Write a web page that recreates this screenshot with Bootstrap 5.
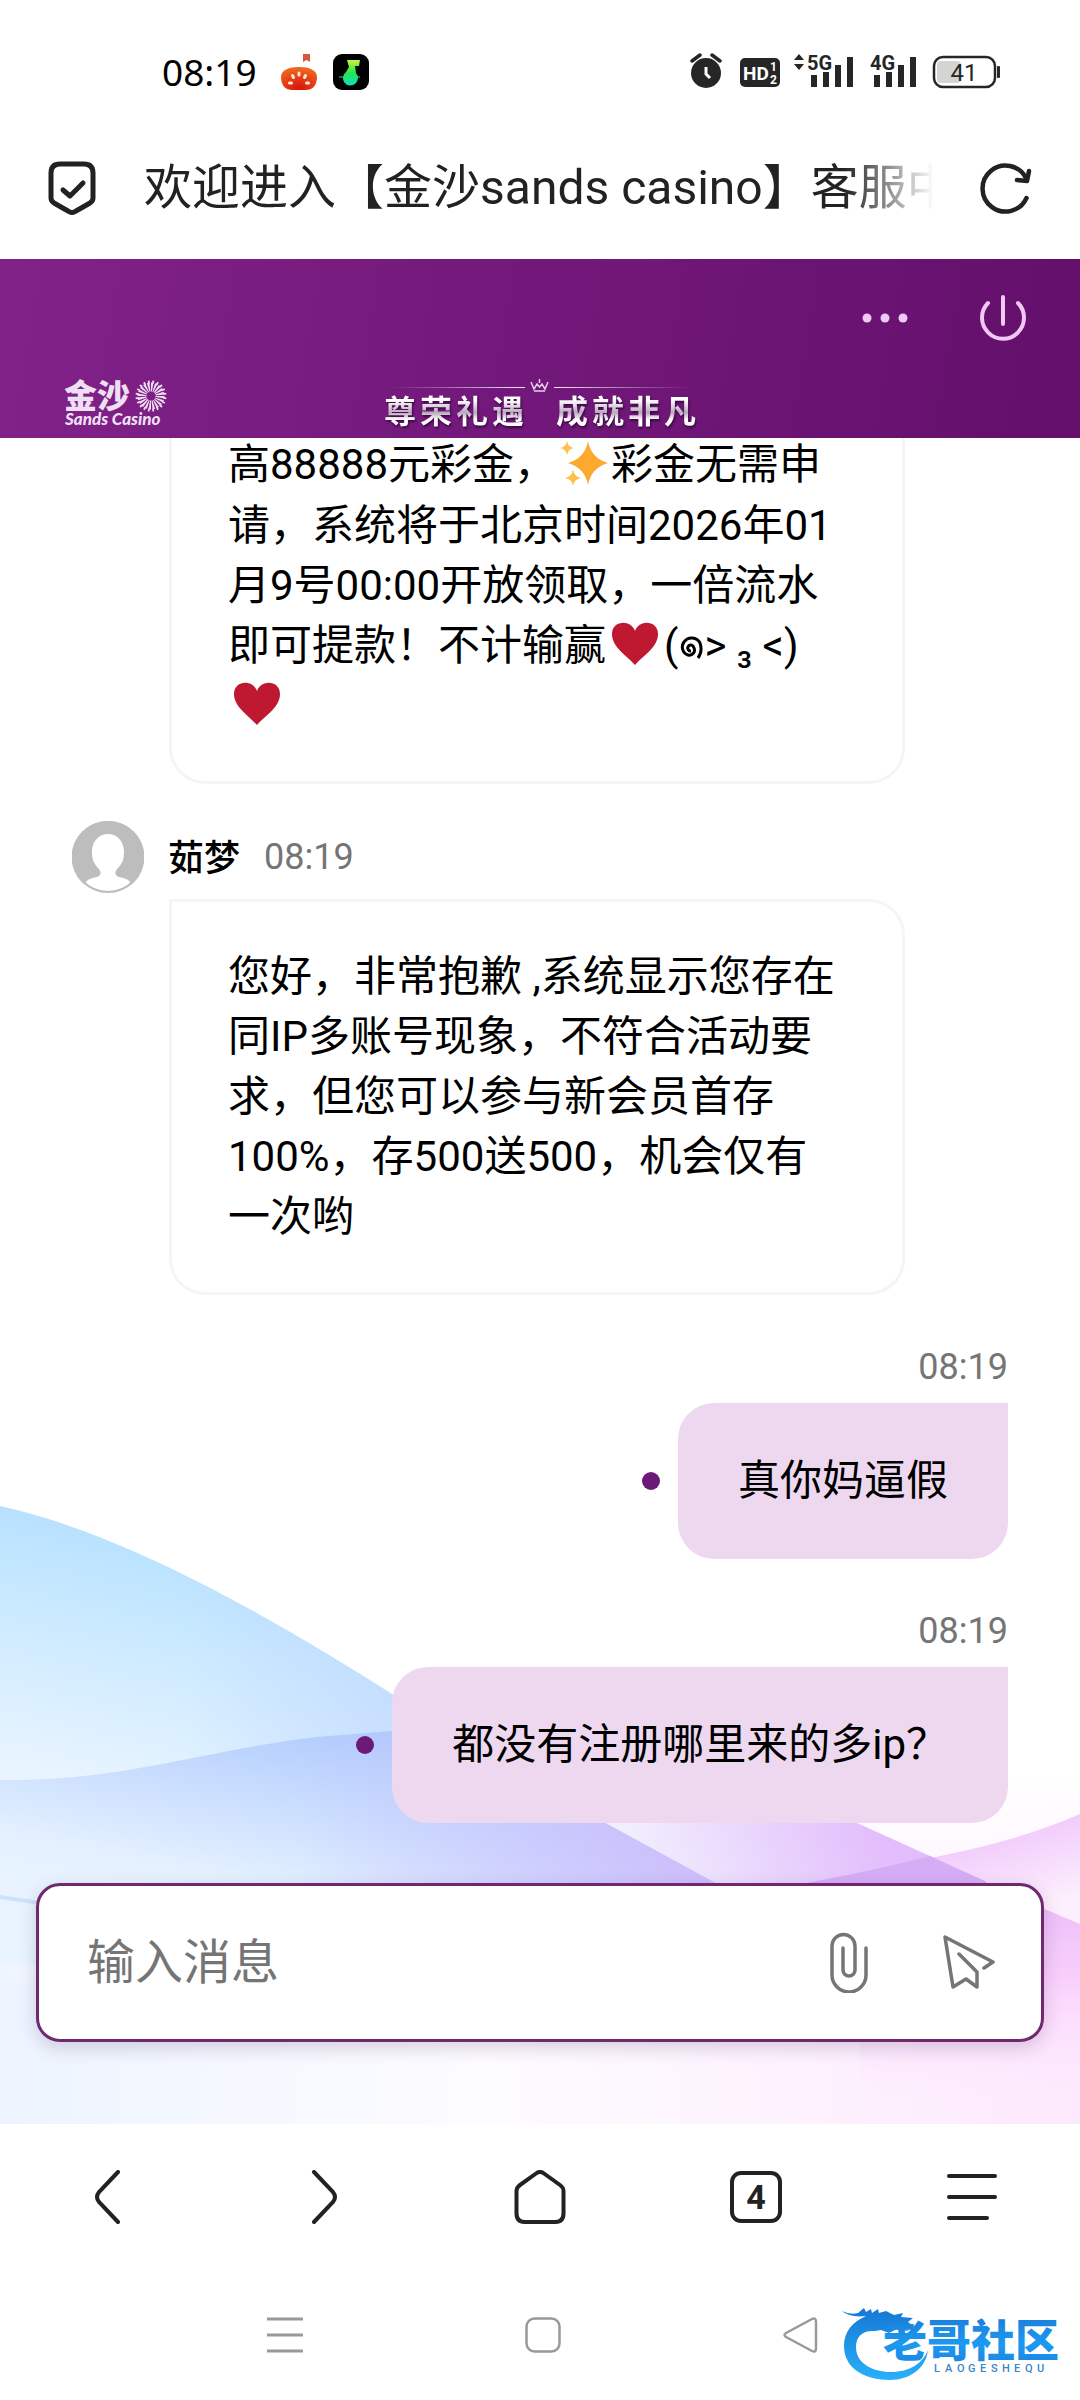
<!DOCTYPE html>
<html lang="zh-CN">
<head>
<meta charset="utf-8">
<meta name="viewport" content="width=device-width, initial-scale=1">
<title>欢迎进入【金沙sands casino】客服中心</title>
<link href="https://cdn.jsdelivr.net/npm/bootstrap@5.3.0/dist/css/bootstrap.min.css" rel="stylesheet">
<style>
  :root { --plum: #6b1a78; --ink: #222; --muted: #757575; }
  body { font-family: Roboto, "Noto Sans CJK SC", sans-serif; color: #000; background: #fff; }
  svg { display: block; flex: none; }
  .btn-bare { border: 0; background: none; padding: 0; color: inherit; display: flex; align-items: center; justify-content: center; }

  .status-row { padding: 48px 78px 0 162px; height: 96px; }
  .status-clock { font-family: "Noto Sans", sans-serif; font-size: 37px; line-height: 48px; margin-right: 24px; }

  .address-row { padding: 62px 48px 41px; color: var(--ink); }
  .page-title { font-size: 48px; line-height: 60px; margin: 0 46px 0 48px; font-weight: 400; overflow: hidden; white-space: nowrap;
    -webkit-mask-image: linear-gradient(to right, #000 calc(100% - 90px), transparent); mask-image: linear-gradient(to right, #000 calc(100% - 90px), transparent); }

  .brand-bar { height: 179px; background: linear-gradient(100deg, #812289 0%, #72187a 50%, #640f6c 100%); color: #efc9f3; padding: 0 53px 11px 64px; }
  .brand-tools { gap: 56px; padding-top: 34px; }
  .slogan { left: 0; right: 0; bottom: 11px; }
  .slogan-words { margin-top: -3px; filter: drop-shadow(1px 2px 1px #3d0745); }
  .slogan-words span { font-family: "Noto Sans CJK SC", sans-serif; font-weight: 700; font-size: 32px; line-height: 36px; width: 36px; text-align: center;
    color: transparent; background: linear-gradient(#fff 25%, #b9a9bd 60%, #fff 80%); -webkit-background-clip: text; background-clip: text; }
  .slogan-gap { margin-left: 28px; }

  .chat { overflow: hidden; }
  .waves { left: 0; bottom: 0; width: 100%; height: 720px; }
  .log { padding: 0 72px; }
  .bubble { font-size: 42px; line-height: 60px; }
  .bubble-in { width: 736px; margin-left: 97px; padding: 45px 57px 45px 56px; background: #fff; border: 3px solid #f5f5f5; border-radius: 0 36px 36px 36px; }
  .bubble-cut { border-top: 0; border-radius: 0 0 36px 36px; padding-top: 0; margin-top: -3px; }
  .bubble-out { padding: 48px 60px; background: #eed8ef; border-radius: 36px 0 36px 36px; }
  .inline-pic { display: inline-block; vertical-align: middle; margin-bottom: 10px; }
  .inline-glyph { display: inline-block; vertical-align: middle; }
  .sender { gap: 24px; margin: 37px 0 6px; }
  .sender-name { font-family: "Noto Sans CJK SC", sans-serif; font-size: 36px; font-weight: 500; line-height: 44px; margin-bottom: 4px; }
  .stamp { font-size: 36px; line-height: 48px; color: var(--muted); }
  .outgoing { gap: 12px; margin-top: 48px; }
  .unread { width: 18px; height: 18px; border-radius: 50%; background: var(--plum); margin-right: 18px; }

  .composer { margin: 60px 36px 82px; height: 159px; padding: 0 46px 0 48px; background: #fff; border: 3px solid #70286f; border-radius: 24px; box-shadow: 0 6px 18px rgba(60, 20, 80, .18); color: var(--muted); }
  .composer input { border: 0; padding: 0; font-size: 48px; line-height: 60px; height: 72px; color: #000; background: none; }
  .composer input:focus { box-shadow: none; }
  .composer input::placeholder { color: var(--muted); opacity: 1; }
  .attach { margin-right: 34px; }

  .browser-nav { height: 147px; color: var(--ink); }
  .tab-count { width: 52px; height: 52px; border: 4px solid var(--ink); border-radius: 11px; font-size: 34px; line-height: 44px; font-weight: 700; }
  .system-nav { height: 130px; color: #999; padding: 46px 261px 48px 267px; }
  .watermark { right: 12px; bottom: 14px; }
</style>
</head>
<body class="d-flex flex-column min-vh-100">

<div class="status-row d-flex align-items-center">
  <span class="status-clock">08:19</span>
  <svg width="88" height="38" viewBox="0 0 88 38" aria-hidden="true">
    <defs>
      <radialGradient id="tomato" cx=".5" cy=".9" r=".8"><stop offset="0" stop-color="#d9130c"/><stop offset="1" stop-color="#f0631b"/></radialGradient>
      <linearGradient id="note" x1="0" y1="0" x2="0" y2="1"><stop offset="0" stop-color="#c8f23a"/><stop offset=".5" stop-color="#22e64c"/><stop offset="1" stop-color="#12dfc4"/></linearGradient>
    </defs>
    <path d="M22 1h7v8l-3.500-2-3.500 2z" fill="#cf5a3c"/>
    <path d="M0 24C0 17 8 14 18 14s18 3 18 10c0 9-5 13-11 13H11C5 37 0 33 0 24z" fill="url(#tomato)"/>
    <g stroke="#ffe9dc" stroke-width="3" stroke-linecap="round"><path d="M18 20v2M11.500 22.500l1 2M24.500 22.500l-1 2M8.500 30h2M25.500 30h2"/></g>
    <rect x="52" y="1" width="36" height="36" rx="9" fill="#000"/>
    <path d="M66 7h13l-1 6h-4l1 7a7.500 7.500 0 1 1-10-1l3-5z" fill="url(#note)"/><path d="M58 24h7M74 24h5" stroke="#22e67c" stroke-width="1"/>
  </svg>
  <svg class="ms-auto" width="312" height="38" viewBox="0 0 312 38" fill="#262626" font-family="Roboto, sans-serif" font-weight="700" aria-hidden="true">
    <circle cx="16" cy="20" r="15"/><path d="M2 8l8-6M30 8l-8-6" stroke="#262626" stroke-width="3.500" stroke-linecap="round"/>
    <path d="M16 14v7l4 4" fill="none" stroke="#fff" stroke-width="3"/>
    <rect x="50" y="5" width="40" height="29" rx="5"/>
    <text x="53" y="27" font-size="19" fill="#fff">HD</text><text x="80" y="18" font-size="12" fill="#fff">1</text><text x="80" y="31" font-size="12" fill="#fff">2</text>
    <path d="M109 1l5 6h-10zM109 17l5-6h-10z"/>
    <text x="117" y="17" font-size="20">5G</text>
    <path d="M121 22h6v12h-6zM133 19h6v15h-6zM145 12h6v22h-6zM157 4h6v30h-6z"/>
    <text x="180" y="17" font-size="20">4G</text>
    <path d="M184 22h6v12h-6zM196 19h6v15h-6zM208 12h6v22h-6zM220 4h6v30h-6z"/>
    <rect x="247" y="8" width="24" height="22" rx="4" fill="#d4d4d4"/>
    <rect x="244" y="4" width="61" height="30" rx="9" fill="none" stroke="#262626" stroke-width="2.500"/><rect x="307" y="13" width="3" height="12" rx="1"/>
    <text x="274" y="28" font-size="24" font-weight="400" text-anchor="middle">41</text>
  </svg>
</div>

<div class="address-row d-flex align-items-center">
  <svg width="48" height="54" viewBox="0 0 48 54" fill="none" stroke="currentColor" stroke-width="5" stroke-linejoin="round" stroke-linecap="round" aria-label="安全" role="img">
    <path d="M12 3h24q9 0 9 9v25q0 3-3 5L28 50q-4 3-8 0L6 42q-3-2-3-5V12q0-9 9-9z"/><path d="M15 29l7 6 13-13"/>
  </svg>
  <h1 class="page-title flex-fill">欢迎进入【金沙sands casino】客服中心</h1>
  <button type="button" class="btn-bare" aria-label="刷新">
    <svg width="52" height="54" viewBox="0 0 52 54" fill="none" stroke="currentColor" stroke-width="4.500" stroke-linecap="round" stroke-linejoin="round">
      <path d="M46.500 37A23 23 0 1 1 46 17"/><path d="M49 10l-2 10-10-1"/>
    </svg>
  </button>
</div>

<header class="brand-bar position-relative d-flex align-items-end justify-content-between">
  <svg width="104" height="48" viewBox="0 0 104 48" fill="#efdff2" aria-label="金沙 Sands Casino" role="img">
    <text x="0" y="29" font-family="'Noto Sans CJK SC', sans-serif" font-weight="900" font-size="33">金沙</text>
    <g fill="none" stroke="#efdff2"><circle cx="87" cy="17" r="9" stroke-width="9" pathLength="40" stroke-dasharray="1.200 .8"/><circle cx="87" cy="17" r="14" stroke-width="3" pathLength="40" stroke-dasharray=".8 1.200" stroke-dashoffset="-.6"/></g>
    <text x="1" y="46" font-family="Lato, sans-serif" font-style="italic" font-weight="900" font-size="17">Sands Casino</text>
  </svg>
  <div class="slogan position-absolute d-flex flex-column align-items-center">
    <svg width="300" height="16" viewBox="0 0 300 16" fill="none" stroke="#e9cdec" aria-hidden="true">
      <defs><linearGradient id="fadeL"><stop offset="0" stop-color="#e9cdec" stop-opacity="0"/><stop offset="1" stop-color="#f7e6f9"/></linearGradient><linearGradient id="fadeR"><stop offset="0" stop-color="#f7e6f9"/><stop offset="1" stop-color="#e9cdec" stop-opacity="0"/></linearGradient></defs>
      <rect x="0" y="9" width="135" height="1" fill="url(#fadeL)" stroke="none"/><rect x="164" y="9" width="136" height="1" fill="url(#fadeR)" stroke="none"/>
      <path d="M141 4l3 7 3-5 2.500 3L152 6l3 5 3-7M144 13h11M149.500 1v4" stroke-width="1.500"/>
    </svg>
    <div class="slogan-words d-flex"><span>尊</span><span>荣</span><span>礼</span><span>遇</span><span class="slogan-gap">成</span><span>就</span><span>非</span><span>凡</span></div>
  </div>
  <div class="brand-tools d-flex align-items-center align-self-start ms-auto">
    <button type="button" class="btn-bare" aria-label="更多"><svg width="70" height="50" viewBox="0 0 70 50" fill="currentColor"><circle cx="16" cy="25" r="4.500"/><circle cx="34" cy="25" r="4.500"/><circle cx="52" cy="25" r="4.500"/></svg></button>
    <button type="button" class="btn-bare" aria-label="退出"><svg width="50" height="50" viewBox="0 0 50 50" fill="none" stroke="currentColor" stroke-width="4" stroke-linecap="round"><path d="M11 10a21 21 0 1 0 30 0M26 4v27"/></svg></button>
  </div>
</header>

<main class="chat position-relative flex-grow-1">
  <svg class="waves position-absolute" viewBox="0 0 1080 720" preserveAspectRatio="none" aria-hidden="true">
    <defs>
      <linearGradient id="base" x1="0" x2="1" y1="0" y2="0"><stop offset="0" stop-color="#edf4ff"/><stop offset=".45" stop-color="#fdfcff"/><stop offset="1" stop-color="#fde9fd"/></linearGradient>
      <linearGradient id="topFade" x1="0" x2="0" y1="0" y2="1"><stop offset=".52" stop-color="#fff"/><stop offset=".82" stop-color="#fff" stop-opacity="0"/></linearGradient>
      <linearGradient id="skyWing" gradientUnits="userSpaceOnUse" x1="150" y1="110" x2="90" y2="375"><stop offset="0" stop-color="#b3dfff"/><stop offset=".4" stop-color="#c8e9ff"/><stop offset="1" stop-color="#e8f4ff"/></linearGradient>
      <linearGradient id="skyTint" x1="0" x2="1" y1="0" y2="0"><stop offset=".4" stop-color="#bcd0ff" stop-opacity="0"/><stop offset="1" stop-color="#bfcfff" stop-opacity=".6"/></linearGradient>
      <linearGradient id="blueWing" gradientUnits="userSpaceOnUse" x1="380" y1="320" x2="320" y2="620"><stop offset="0" stop-color="#acc8fc"/><stop offset=".35" stop-color="#cde0ff"/><stop offset=".6" stop-color="#e4f1ff"/><stop offset="1" stop-color="#edf4ff" stop-opacity="0"/></linearGradient>
      <linearGradient id="violetTint" gradientUnits="userSpaceOnUse" x1="300" y1="0" x2="716" y2="0"><stop offset="0" stop-color="#cfc4ff" stop-opacity="0"/><stop offset="1" stop-color="#cdbdfb"/></linearGradient>
      <linearGradient id="lilac" gradientUnits="userSpaceOnUse" x1="640" y1="480" x2="870" y2="400"><stop offset="0" stop-color="#f1effe"/><stop offset="1" stop-color="#e2bdfc"/></linearGradient>
      <linearGradient id="pinkCrest" gradientUnits="userSpaceOnUse" x1="960" y1="430" x2="985" y2="520"><stop offset="0" stop-color="#efc6fc"/><stop offset="1" stop-color="#fdf0fd"/></linearGradient>
      <linearGradient id="pinkLow" gradientUnits="userSpaceOnUse" x1="0" y1="500" x2="0" y2="590"><stop offset="0" stop-color="#eebdfa"/><stop offset="1" stop-color="#f8d5fb"/></linearGradient>
      <linearGradient id="pinkFloor" gradientUnits="userSpaceOnUse" x1="0" y1="558" x2="0" y2="700"><stop offset="0" stop-color="#f8c8fb"/><stop offset="1" stop-color="#fdeafd" stop-opacity="0"/></linearGradient>
    </defs>
    <rect width="1080" height="720" fill="url(#base)"/><rect width="1080" height="720" fill="url(#topFade)"/>
    <path d="M0 102C130 130 290 225 392 290L606 420 716 480 860 560H0z" fill="url(#skyWing)"/>
    <path d="M0 102C130 130 290 225 392 290L460 330V400H0z" fill="url(#skyTint)"/>
    <path d="M0 376C120 378 210 345 317 333L480 320 606 419 716 479V640H0z" fill="url(#blueWing)"/>
    <path d="M300 334L480 320 606 419 716 479V520H300z" fill="url(#violetTint)"/>
    <path d="M480 340L606 419 716 479 800 520H1010L985 477 930 452 857 419 760 370z" fill="url(#lilac)"/>
    <path d="M1080 410C1000 445 930 453 806 479L900 540H1080z" fill="url(#pinkCrest)"/>
    <path d="M806 479Q880 465 930 452L985 477 1010 500H820z" fill="#d5adf6"/>
    <path d="M860 480H985L1080 520V558Q980 568 860 571z" fill="url(#pinkLow)"/>
    <path d="M860 570Q980 568 1080 557V720H860z" fill="url(#pinkFloor)"/>
    <path d="M0 493Q20 496 60 502" fill="none" stroke="#cfe2fb" stroke-width="4"/>
  </svg>

  <div class="log position-relative">
    <div class="bubble bubble-in bubble-cut">高88888元彩金，<svg class="inline-pic" width="55" height="46" viewBox="0 0 55 46" role="img" aria-label="闪光"><path d="M32 1q3 17 20 22-17 5-20 22-3-17-20-22 17-5 20-22z" fill="#fda92f"/><path d="M11 1q1 6 7 7-6 1-7 7-1-6-7-7 6-1 7-7zM17 29q1 8 8 9-7 1-8 8-1-7-8-8 7-1 8-9z" fill="#fcc04b"/></svg>彩金无需申请，系统将于北京时间2026年01月9号00:00开放领取，一倍流水即可提款！不计输赢<svg class="inline-pic" width="58" height="44" viewBox="0 0 58 44" role="img" aria-label="红心"><path d="M29 43C20 33 6 25 6 12 6 -2 25 -3 29 9 33 -3 52 -2 52 12 52 25 38 33 29 43z" fill="#be1931"/></svg>(<svg class="inline-glyph" width="26" height="28" viewBox="0 0 26 28" fill="none" stroke="#000" stroke-width="3" role="img" aria-label="๑"><path d="M13 16a3 3 0 1 1 2-5c4 6-1 10-5 9-6-2-7-9-4-13 4-6 13-5 16 1 2 6 1 11-2 15"/></svg>&gt; ₃ &lt;) <svg class="inline-pic" width="58" height="44" viewBox="0 0 58 44" role="img" aria-label="红心"><path d="M29 43C20 33 6 25 6 12 6 -2 25 -3 29 9 33 -3 52 -2 52 12 52 25 38 33 29 43z" fill="#be1931"/></svg></div>

    <div class="sender d-flex align-items-center">
      <svg width="72" height="72" viewBox="0 0 72 72" role="img" aria-label="头像"><circle cx="36" cy="36" r="35" fill="#fff" stroke="#bdbdbd" stroke-width="2"/><path d="M36 0a36 36 0 0 0-23 64c1-6 7-7 12-8 4-1 5-5 1-9-4-4-6-9-6-16 0-11 7-18 16-18s16 7 16 18c0 7-2 12-6 16-4 4-3 8 1 9 5 1 11 2 12 8A36 36 0 0 0 36 0z" fill="#bdbdbd"/></svg>
      <span class="sender-name">茹梦</span>
      <time class="stamp">08:19</time>
    </div>
    <div class="bubble bubble-in">您好，非常抱歉 ,系统显示您存在同IP多账号现象，不符合活动要求，但您可以参与新会员首存100%，存500送500，机会仅有一次哟</div>

    <div class="outgoing d-flex flex-column align-items-end">
      <time class="stamp">08:19</time>
      <div class="d-flex align-items-center"><span class="unread"></span><div class="bubble bubble-out">真你妈逼假</div></div>
    </div>
    <div class="outgoing d-flex flex-column align-items-end">
      <time class="stamp">08:19</time>
      <div class="d-flex align-items-center"><span class="unread"></span><div class="bubble bubble-out">都没有注册哪里来的多ip？</div></div>
    </div>
  </div>

  <form class="composer position-relative d-flex align-items-center">
    <input type="text" class="form-control flex-fill" placeholder="输入消息" aria-label="输入消息">
    <button type="button" class="btn-bare attach" aria-label="附件"><svg width="90" height="62" viewBox="0 0 90 62" fill="none" stroke="currentColor" stroke-width="3.500" stroke-linecap="round"><path d="M24 17v22a5.500 5.500 0 0 0 12 0V15a11.500 11.500 0 0 0-23 0v29a17 17 0 0 0 34 0V17"/></svg></button>
    <button type="submit" class="btn-bare" aria-label="发送"><svg width="52" height="54" viewBox="0 0 52 54" fill="none" stroke="currentColor" stroke-width="3.500" stroke-linecap="round" stroke-linejoin="round"><path d="M41 33l9-6L2 2l8 50 13-8 11 8V37L16 19"/></svg></button>
  </form>
</main>

<nav class="browser-nav row g-0 align-items-center flex-shrink-0" aria-label="浏览器">
  <div class="col d-flex justify-content-center"><button type="button" class="btn-bare" aria-label="后退"><svg width="28" height="54" viewBox="0 0 28 54" fill="none" stroke="currentColor" stroke-width="4" stroke-linecap="round"><path d="M24 2L5 22q-4 5 0 10l19 20"/></svg></button></div>
  <div class="col d-flex justify-content-center"><button type="button" class="btn-bare" aria-label="前进"><svg width="28" height="54" viewBox="0 0 28 54" fill="none" stroke="currentColor" stroke-width="4" stroke-linecap="round"><path d="M4 2l19 20q4 5 0 10L4 52"/></svg></button></div>
  <div class="col d-flex justify-content-center"><button type="button" class="btn-bare" aria-label="主页"><svg width="52" height="54" viewBox="0 0 52 54" fill="none" stroke="currentColor" stroke-width="4" stroke-linejoin="round"><path d="M22 3.500q4-3 8 0L46 15q3.500 2.500 3.500 6v22q0 9-8 9h-31q-8 0-8-9V21q0-3.500 3.500-6z"/></svg></button></div>
  <div class="col d-flex justify-content-center"><button type="button" class="btn-bare tab-count" aria-label="标签页 4">4</button></div>
  <div class="col d-flex justify-content-center"><button type="button" class="btn-bare" aria-label="菜单"><svg width="52" height="54" viewBox="0 0 52 54" stroke="currentColor" stroke-width="4" stroke-linecap="round"><path d="M3 6h46M3 27h46M3 48h38"/></svg></button></div>
</nav>

<footer class="system-nav position-relative d-flex justify-content-between align-items-center flex-shrink-0">
  <button type="button" class="btn-bare" aria-label="最近任务"><svg width="36" height="36" viewBox="0 0 36 36" stroke="currentColor" stroke-width="3"><path d="M0 2h36M0 18h36M0 34h36"/></svg></button>
  <button type="button" class="btn-bare" aria-label="桌面"><svg width="36" height="36" viewBox="0 0 36 36" fill="none" stroke="currentColor" stroke-width="2.500"><rect x="1.500" y="1.500" width="33" height="33" rx="8"/></svg></button>
  <button type="button" class="btn-bare" aria-label="返回"><svg width="36" height="36" viewBox="0 0 36 36" fill="none" stroke="currentColor" stroke-width="2.500" stroke-linejoin="round"><path d="M3 16L29 2q4-2 4 3v26q0 5-4 3L3 20q-3-2 0-4z"/></svg></button>
  <svg class="watermark position-absolute" width="228" height="82" viewBox="0 0 228 82" role="img" aria-label="老哥社区 LAOGESHEQU">
    <defs><linearGradient id="dragon" x1="0" x2="0" y1="0" y2="1"><stop offset="0" stop-color="#1478d4"/><stop offset="1" stop-color="#2ab0fa"/></linearGradient>
    <linearGradient id="word" x1="0" x2="0" y1="0" y2="1"><stop offset="0" stop-color="#1c74d0"/><stop offset=".6" stop-color="#1b9af2"/><stop offset="1" stop-color="#1c80dc"/></linearGradient></defs>
    <path d="M2 6q8 4 16 2l6-5 2 4 5-3 1 4 6-4 1 4 7-2 8 4 9-2-2 4 12 1-5 4 4 3-9 1 6 5-12-2-8 4-8-3-6 1C23 25 16 31 16 42 16 58 32 67 51 67 70 67 83 58 88 45 86 63 70 75 50 75 24 75 4 63 4 41 4 27 12 17 26 11Q10 13 2 6z" fill="url(#dragon)"/>
    <text x="43" y="52" font-family="'Noto Sans CJK SC', sans-serif" font-weight="900" font-size="44" fill="url(#word)">老哥社区</text>
    <g font-family="Roboto, sans-serif" font-weight="500" font-size="11" fill="#3b86c9"><text x="94 105 117 128 140 151 162 174 185 197" y="67">LAOGESHEQU</text></g>
  </svg>
</footer>

<script src="https://cdn.jsdelivr.net/npm/bootstrap@5.3.0/dist/js/bootstrap.bundle.min.js"></script>
</body>
</html>
